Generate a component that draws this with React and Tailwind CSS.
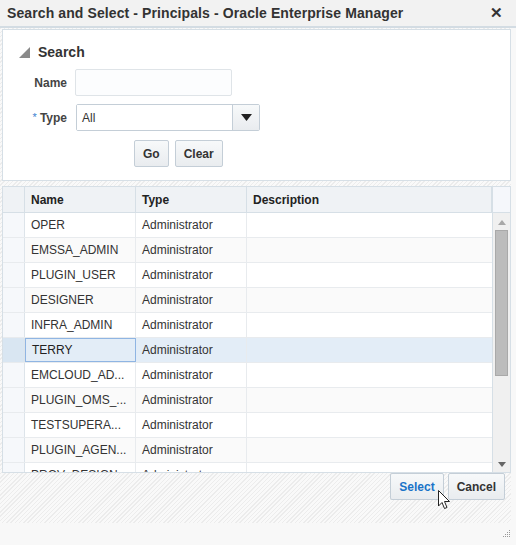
import React from "react";

const rows = [
  { name: "OPER", type: "Administrator" },
  { name: "EMSSA_ADMIN", type: "Administrator" },
  { name: "PLUGIN_USER", type: "Administrator" },
  { name: "DESIGNER", type: "Administrator" },
  { name: "INFRA_ADMIN", type: "Administrator" },
  { name: "TERRY", type: "Administrator", selected: true },
  { name: "EMCLOUD_AD...", type: "Administrator" },
  { name: "PLUGIN_OMS_...", type: "Administrator" },
  { name: "TESTSUPERA...", type: "Administrator" },
  { name: "PLUGIN_AGEN...", type: "Administrator" },
  { name: "PROV_DESIGN...", type: "Administrator" },
];

const hatch =
  "bg-[repeating-linear-gradient(135deg,#ececec_0px,#ececec_1px,#f9f9f9_1px,#f9f9f9_3px)]";

const Button = ({ children, blue }) => (
  <button
    className={
      "h-[27px] px-[8px] rounded-[2px] border border-[#c4ced7] bg-gradient-to-b from-[#f7f9fa] to-[#e9ecef] text-[12px] font-bold " +
      (blue ? "text-[#1a73c8]" : "text-[#333]")
    }
  >
    {children}
  </button>
);

const App = () => {
  return (
    <div className="relative w-[516px] h-[545px] bg-[#f8f8f8] flex flex-col font-['Liberation_Sans',Arial,sans-serif] text-[#333] overflow-hidden">
      {/* title bar */}
      <div className="h-[28px] shrink-0 bg-[#f2f2f2] border-b-2 border-[#d3dce3] flex items-center pl-[7px] pr-[13px]">
        <span className="text-[14px] font-bold text-[#333] tracking-[0.1px]">
          Search and Select - Principals - Oracle Enterprise Manager
        </span>
        <span className="ml-auto text-[15px] font-bold text-[#333]">✕</span>
      </div>

      <div className={"w-[511px] flex flex-col " + hatch}>
        {/* search panel */}
        <div className="ml-[2px] mt-[1px] h-[152px] bg-white border border-[#d6dfe6] pt-[12px]">
          <div className="flex items-center pl-[16px] gap-[8px]">
            <svg width="11" height="11" viewBox="0 0 11 11">
              <polygon points="11,0 11,11 0,11" fill="#8a8a8a" />
            </svg>
            <span className="text-[14px] font-bold text-[#333]">Search</span>
          </div>
          <div className="flex items-center mt-[6px]">
            <span className="w-[64px] text-right text-[12px] font-bold text-[#444]">Name</span>
            <div className="ml-[8px] w-[157px] h-[27px] border border-[#dfe4e8] rounded-[2px] bg-[#fcfdfe]" />
          </div>
          <div className="flex items-center mt-[8px]">
            <span className="w-[64px] text-right text-[12px] font-bold text-[#444]">
              <span className="text-[#3b7fd0] font-normal align-top text-[11px] mr-[3px]">*</span>Type
            </span>
            <div className="ml-[9px] flex h-[27px] border border-[#c4ced7] rounded-[2px]">
              <div className="w-[155px] bg-white flex items-center pl-[5px] text-[12px] text-[#333]">All</div>
              <div className="w-[27px] border-l border-[#c4ced7] bg-gradient-to-b from-[#f7f9fa] to-[#e9ecef] flex items-center justify-center">
                <svg width="11" height="7" viewBox="0 0 11 7">
                  <polygon points="0,0 11,0 5.5,7" fill="#222" />
                </svg>
              </div>
            </div>
          </div>
          <div className="flex gap-[6px] ml-[131px] mt-[9px]">
            <Button>Go</Button>
            <Button>Clear</Button>
          </div>
        </div>

        {/* table */}
        <div className="ml-[2px] mt-[5px] h-[286px] w-[509px] bg-white border border-[#d6dfe6] border-b-0 flex overflow-hidden">
          <div className="flex-1 flex flex-col overflow-hidden">
            <div className="h-[26px] shrink-0 flex bg-[#eff2f5] border-b border-[#d6dfe6] text-[12px] font-bold text-[#222]">
              <div className="w-[22px] border-r border-[#d6dfe6]" />
              <div className="w-[111px] border-r border-[#d6dfe6] flex items-center pl-[6px]">Name</div>
              <div className="w-[111px] border-r border-[#d6dfe6] flex items-center pl-[6px]">Type</div>
              <div className="flex-1 border-r border-[#d6dfe6] flex items-center pl-[6px]">Description</div>
            </div>
            {rows.map((r, i) => (
              <div
                key={r.name}
                className={
                  "h-[25px] shrink-0 flex text-[12px] border-b border-[#e8ebee] " +
                  (r.selected ? "bg-[#e3edf7]" : i % 2 === 0 ? "bg-white" : "bg-[#fafafa]")
                }
              >
                <div
                  className={
                    "w-[22px] border-r border-[#dde4ea] " + (r.selected ? "bg-[#d9e6f2]" : "bg-[#f6f8fb]")
                  }
                />
                <div
                  className={
                    "w-[111px] flex items-center pl-[6px] " +
                    (r.selected
                      ? "border border-[#8fb5e3] text-[#222]"
                      : "border-r border-[#e8ebee] text-[#333]")
                  }
                >
                  {r.name}
                </div>
                <div className="w-[111px] border-r border-[#e8ebee] flex items-center pl-[6px] text-[#333]">
                  {r.type}
                </div>
                <div className="flex-1" />
              </div>
            ))}
          </div>
          {/* scrollbar */}
          <div className="w-[18px] shrink-0 flex flex-col border-l border-[#d6dfe6]">
            <div className="h-[26px] shrink-0 bg-[#f5f7fb] border-b border-[#d6dfe6]" />
            <div className="flex-1 bg-[#f0f0f0] flex flex-col items-center">
              <svg width="8" height="5" viewBox="0 0 8 5" className="mt-[7px]">
                <polygon points="4,0 8,5 0,5" fill="#a8a8a8" />
              </svg>
              <div className="mt-[5px] w-[13px] h-[146px] bg-[#bcbcbc] border border-[#a9a9a9]" />
              <div className="flex-1" />
              <svg width="8" height="5" viewBox="0 0 8 5" className="mb-[5px]">
                <polygon points="0,0 8,0 4,5" fill="#666" />
              </svg>
            </div>
          </div>
        </div>
        <div className="ml-[2px] w-[509px] border-t border-[#d6dfe6]" />

        {/* footer buttons */}
        <div className="h-[50px] flex justify-end items-start gap-[4px] pr-[6px]">
          <Button blue>Select</Button>
          <Button>Cancel</Button>
        </div>
      </div>

      {/* mouse pointer */}
      <svg className="absolute left-[438px] top-[490px]" width="13" height="21" viewBox="0 0 13 21">
        <path
          d="M0.5 0.5 L0.5 16 L4 12.5 L6.5 18.5 L9 17.5 L6.5 11.5 L11.5 11.5 Z"
          fill="#fff"
          stroke="#222"
          strokeWidth="1"
        />
      </svg>

      {/* resize grip */}
      <svg className="absolute right-[5px] bottom-[7px]" width="8" height="8" viewBox="0 0 8 8">
        <rect x="6" y="0" width="1" height="1" fill="#999" />
        <rect x="4" y="2" width="1" height="1" fill="#999" />
        <rect x="6" y="2" width="1" height="1" fill="#999" />
        <rect x="2" y="4" width="1" height="1" fill="#999" />
        <rect x="4" y="4" width="1" height="1" fill="#999" />
        <rect x="6" y="4" width="1" height="1" fill="#999" />
        <rect x="0" y="6" width="1" height="1" fill="#999" />
        <rect x="2" y="6" width="1" height="1" fill="#999" />
        <rect x="4" y="6" width="1" height="1" fill="#999" />
        <rect x="6" y="6" width="1" height="1" fill="#999" />
      </svg>
    </div>
  );
};

export default App;
